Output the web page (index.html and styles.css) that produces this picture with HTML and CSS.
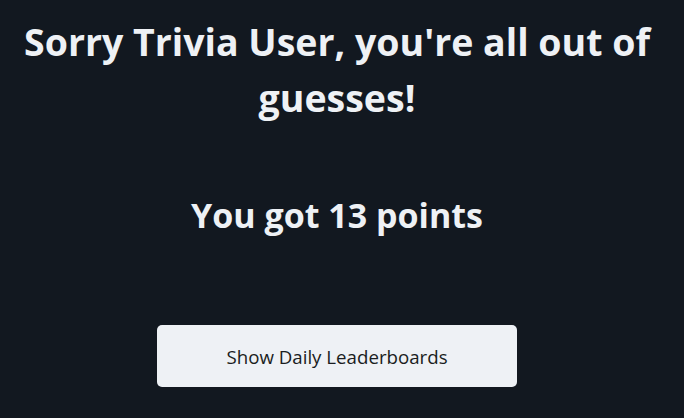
FILE: index.html
```html
<!DOCTYPE html>
<html>
<head>
<meta charset="utf-8">
<link rel="stylesheet" href="styles.css">
</head>
<body>
<main class="result">
  <h1 class="title">Sorry Trivia User, you're all out of guesses!</h1>
  <h2 class="score">You got 13 points</h2>
  <button class="board-btn">Show Daily Leaderboards</button>
</main>
</body>
</html>
```
FILE: styles.css
```css
html, body {
  margin: 0;
  padding: 0;
  background: #121820;
}
body {
  font-family: "Open Sans", "Noto Sans", sans-serif;
  color: #eef1f5;
}
.result {
  width: 674px;
  display: flex;
  flex-direction: column;
  align-items: center;
  text-align: center;
  padding-top: 14px;
}
.title {
  margin: 0;
  font-size: 37.5px;
  line-height: 56px;
  font-weight: 700;
  padding: 0 16px;
}
.score {
  margin: 67px 0 0;
  font-size: 34px;
  line-height: 44px;
  font-weight: 700;
}
.board-btn {
  margin-top: 88px;
  width: 360px;
  height: 62px;
  border: none;
  border-radius: 5px;
  background: #eef1f5;
  color: #1a1d21;
  font-family: "Open Sans", "Noto Sans", sans-serif;
  font-size: 18.7px;
}
```
